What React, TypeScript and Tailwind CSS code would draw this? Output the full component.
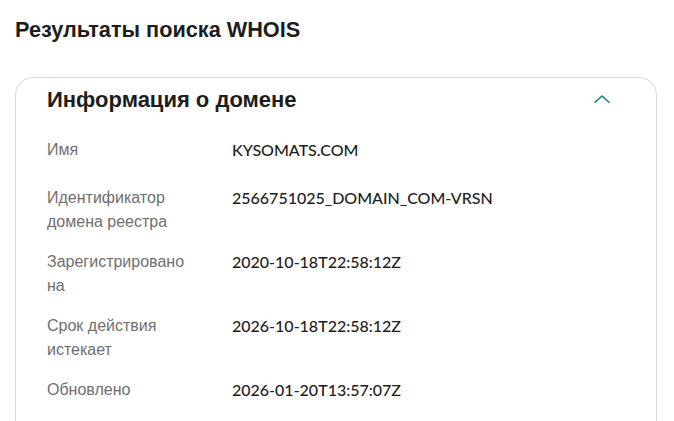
const rows: { label: string; value: string }[] = [
  { label: "Имя", value: "KYSOMATS.COM" },
  { label: "Идентификатор домена реестра", value: "2566751025_DOMAIN_COM-VRSN" },
  { label: "Зарегистрировано на", value: "2020-10-18T22:58:12Z" },
  { label: "Срок действия истекает", value: "2026-10-18T22:58:12Z" },
  { label: "Обновлено", value: "2026-01-20T13:57:07Z" },
];

export default function App() {
  return (
    <div className="h-[421px] w-[674px] overflow-hidden bg-white font-['Liberation_Sans',Arial,sans-serif]">
      <h2 className="pl-[15px] pt-[16px] text-[21.7px] font-bold leading-[28px] text-[#1d1d1b]">
        Результаты поиска WHOIS
      </h2>

      <div className="ml-[15px] mt-[33px] h-[400px] w-[642px] rounded-t-[18px] border border-b-0 border-[#d6dade] pl-[31px] pr-[40px] pt-[7px]">
        <div className="flex items-center justify-between">
          <h3 className="text-[22px] font-bold leading-[30px] text-[#1d1d1b]">
            Информация о домене
          </h3>
          <svg
            width="24"
            height="24"
            viewBox="0 0 24 24"
            fill="none"
            stroke="#1f8787"
            strokeWidth="1.8"
            strokeLinecap="round"
            strokeLinejoin="round"
            className="mr-[2px]"
          >
            <path d="M5 15.5l7-7 7 7" transform="translate(0 -1) scale(1 0.9) translate(0 1.5)" />
          </svg>
        </div>

        <div className="mt-[23px] flex flex-col gap-4">
          {rows.map((r) => (
            <div key={r.label} className="flex min-h-8 items-start">
              <div className="w-[150px] shrink-0 text-base leading-6 text-[#6f6f6f]">
                {r.label}
              </div>
              <div className="ml-[35px] font-['Lato',sans-serif] text-base font-medium leading-6 text-[#1d1d1b]">
                {r.value}
              </div>
            </div>
          ))}
        </div>
      </div>
    </div>
  );
}
